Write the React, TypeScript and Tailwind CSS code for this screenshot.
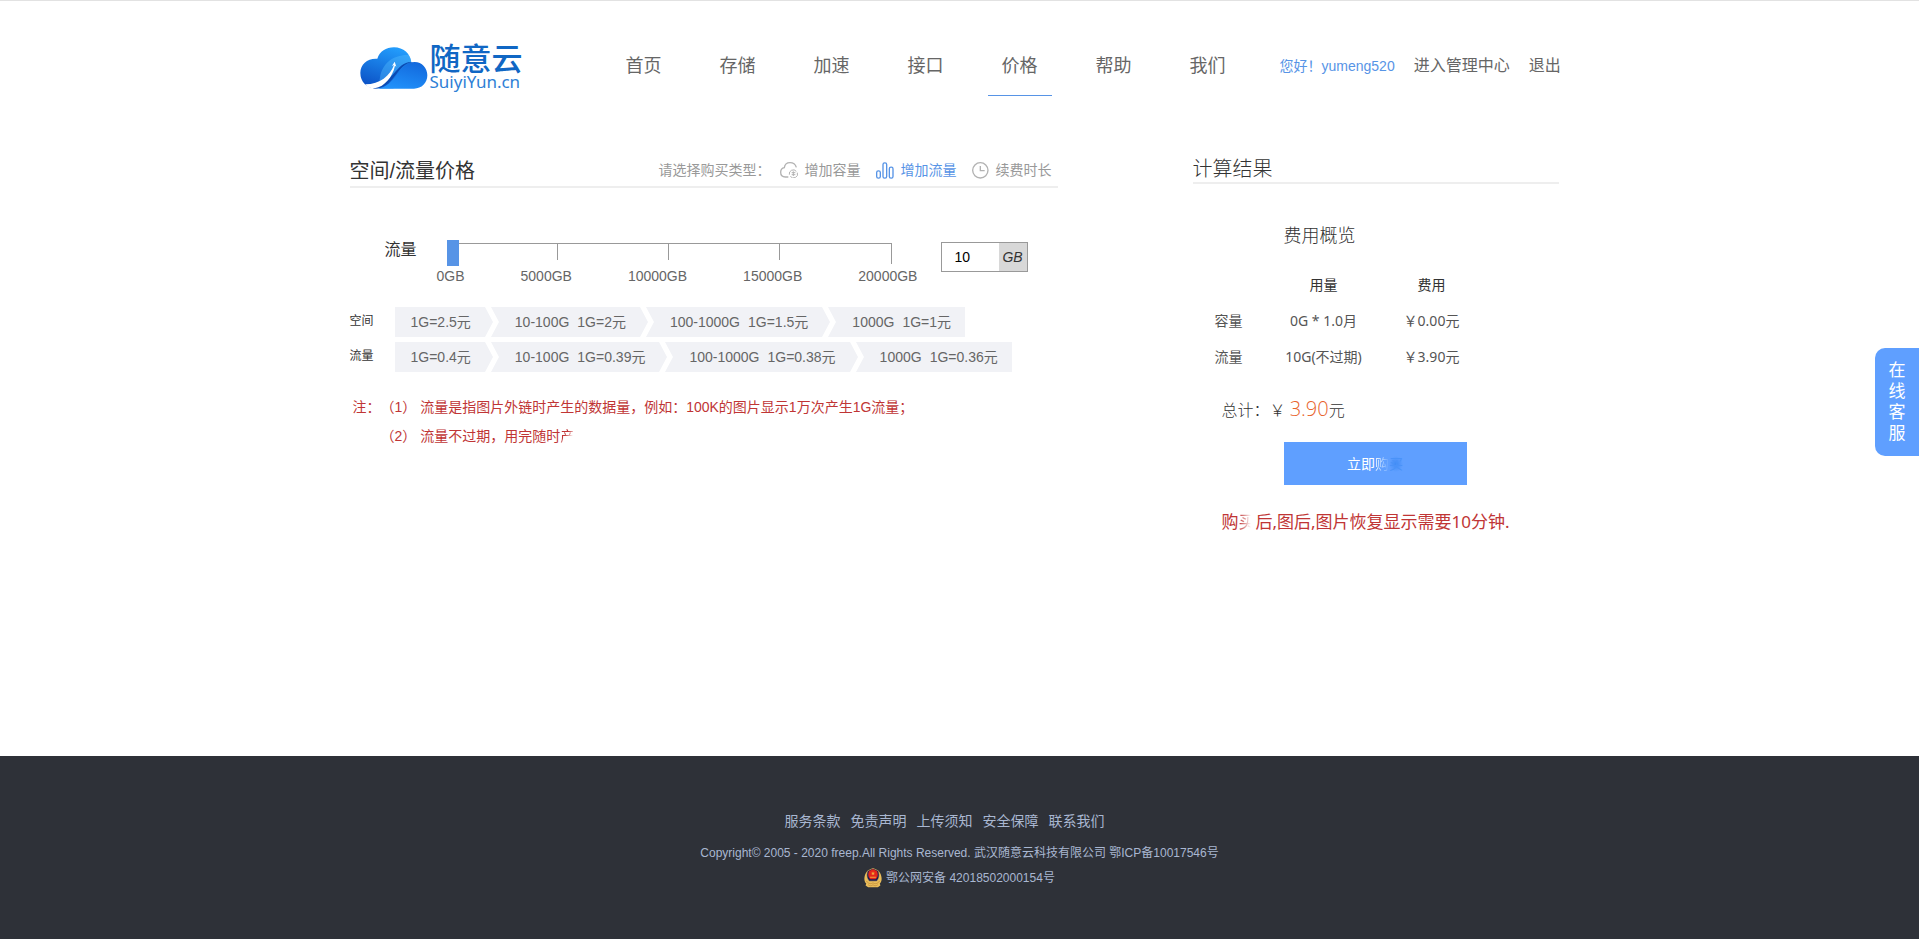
import clsx from 'clsx';
import { useState } from 'react';

type PriceTier = { range?: string; price: string };

const navItems = ['首页', '存储', '加速', '接口', '价格', '帮助', '我们'];

const spaceTiers: PriceTier[] = [
  { price: '1G=2.5元' },
  { range: '10-100G', price: '1G=2元' },
  { range: '100-1000G', price: '1G=1.5元' },
  { range: '1000G', price: '1G=1元' },
];

const trafficTiers: PriceTier[] = [
  { price: '1G=0.4元' },
  { range: '10-100G', price: '1G=0.39元' },
  { range: '100-1000G', price: '1G=0.38元' },
  { range: '1000G', price: '1G=0.36元' },
];

const footerLinks = ['服务条款', '免责声明', '上传须知', '安全保障', '联系我们'];

function Logo() {
  return (
    <a href="#" className="flex items-center gap-[2px]">
      <svg viewBox="0 0 204 126" className="h-[42px] w-[68px]" aria-hidden="true">
        <defs>
          <linearGradient id="cloud-back" x1="0.6" y1="0" x2="0.2" y2="1">
            <stop offset="0" stopColor="#229bfb" />
            <stop offset="1" stopColor="#0b4fc4" />
          </linearGradient>
          <linearGradient id="cloud-front" x1="0.3" y1="1" x2="0.8" y2="0">
            <stop offset="0" stopColor="#2192fb" />
            <stop offset="1" stopColor="#1268dc" />
          </linearGradient>
        </defs>
        <path
          d="M50 124C20 124 1 104 1 78c0-26 20-43 46-43h5C59 13 78 1 102 1c28 0 50 19 52 46 4 30-20 60-54 77z"
          fill="url(#cloud-back)"
        />
        <path d="M60 92C66 50 100 22 146 24c5 7 8 14 8 23-40 4-52 46-94 68-4-6-2-15 0-23z" fill="#55bdff" opacity="0.4" />
        <path
          d="M50 125c60-6 64-80 114-80 22 0 38 18 38 40 0 23-17 40-40 40z"
          fill="url(#cloud-front)"
        />
        <path d="M40 125c64 0 68-74 118-80-46-6-58 62-118 78z" fill="#0b4bb4" />
        <path
          d="M16 112c44 0 74-26 86-58l-6 3 8-13 5 15-4-3c-8 34-30 62-61 68-12 1-22-4-28-12z"
          fill="#fff"
        />
      </svg>
      <span className="flex flex-col">
        <span className="text-[31px] leading-[28px] font-medium text-[#1067c4]">随意云</span>
        <span className="font-['Noto_Sans'] text-[17px] leading-[16px] text-[#2e80d6]">
          SuiyiYun.cn
        </span>
      </span>
    </a>
  );
}

function CapacityIcon() {
  return (
    <svg viewBox="0 0 54 48" className="h-4 w-[18px]" fill="none" stroke="#b2b2b2" strokeWidth="4" aria-hidden="true">
      <path d="M49 16C46 6 38 2 30 2 20 2 14 9 13 17 6 18 2 24 2 31c0 9 6 14 14 14h9" />
      <path d="M28 38a12 12 0 0 1 21-10M52 32a12 12 0 0 1-21 11M35 32h11M35 38h11M40 28v14" strokeWidth="3" />
    </svg>
  );
}

function TrafficIcon() {
  return (
    <svg viewBox="0 0 54 50" className="h-[17px] w-[18px]" fill="none" stroke="#5794e6" strokeWidth="4" aria-hidden="true">
      <rect x="2" y="26" width="11" height="22" rx="5" />
      <rect x="21" y="2" width="11" height="46" rx="5" />
      <rect x="40" y="15" width="11" height="33" rx="5" />
    </svg>
  );
}

function DurationIcon() {
  return (
    <svg viewBox="0 0 51 51" className="size-[17px]" fill="none" stroke="#b2b2b2" strokeWidth="4" aria-hidden="true">
      <circle cx="25" cy="25" r="23" />
      <path d="M25 12v14h13" />
    </svg>
  );
}

function PoliceBadge() {
  return (
    <svg viewBox="0 0 54 62" className="h-5 w-[18px]" aria-hidden="true">
      <path d="M8 12C-2 24-2 42 6 48l-2 6 8 6h30l8-6-2-6c8-6 8-24-2-36z" fill="#e9bd5a" />
      <path d="M27 1l17 8c5 16 1 26-6 32H16C9 35 5 25 10 9z" fill="#171c54" stroke="#e9bd5a" strokeWidth="2" />
      <path d="M27 3l13 7c4 12 1 20-5 25H19c-6-5-9-13-5-25z" fill="#e3261a" />
      <path d="M27 11l2 4h4l-3 3 1 4-4-2-4 2 1-4-3-3h4zM18 27h18v3H18z" fill="#f3a33a" />
      <path d="M6 40c8 10 14 10 21 6 7 4 13 4 21-6M12 52c6 4 10 4 15 0 5 4 9 4 15 0" fill="none" stroke="#b98132" strokeWidth="2" />
    </svg>
  );
}

function PriceRow({ label, tiers }: { label: string; tiers: PriceTier[] }) {
  return (
    <div className="flex">
      <span className="w-[45px] shrink-0 pt-1 text-xs leading-5 text-[#333]">{label}</span>
      <ul className="flex">
        {tiers.map((tier, index) => (
          <li key={tier.price} className="flex h-[30px] items-center bg-[#f1f2f6]">
            <span
              className={clsx(
                'flex gap-2 pl-4 text-sm whitespace-nowrap text-[#666]',
                index === tiers.length - 1 && 'pr-[14px]',
              )}
            >
              {tier.range && <span>{tier.range}</span>}
              <span>{tier.price}</span>
            </span>
            {index < tiers.length - 1 && (
              <svg viewBox="0 0 14 30" className="ml-[14px] h-[30px] w-[14px]" aria-hidden="true">
                <path d="M0 0h6l8 15-8 15H0l8-15z" fill="#fff" />
              </svg>
            )}
          </li>
        ))}
      </ul>
    </div>
  );
}

function TrafficSlider({ value, onChange }: { value: number; onChange: (value: number) => void }) {
  return (
    <div className="flex pt-[52px] pl-[35px]">
      <label htmlFor="traffic" className="w-[62px] text-base leading-5 text-[#333]">
        流量
      </label>
      <div className="w-[484px]">
        <div className="relative h-[26px] pt-[3px]">
          <div className="grid w-[445px] grid-cols-4 border-t border-[#999]">
            <span className="h-4 border-r border-[#999]" />
            <span className="h-4 border-r border-[#999]" />
            <span className="h-4 border-r border-[#999]" />
            <span className="h-5 border-r border-[#999]" />
          </div>
          <input
            id="traffic"
            type="range"
            min={0}
            max={20000}
            value={value}
            onChange={(event) => onChange(Number(event.target.value))}
            className="absolute top-0 left-0 h-[26px] w-[452px] appearance-none bg-transparent [&::-webkit-slider-thumb]:h-[26px] [&::-webkit-slider-thumb]:w-3 [&::-webkit-slider-thumb]:appearance-none [&::-webkit-slider-thumb]:bg-[#5794e6]"
          />
        </div>
        <div className="-ml-[10px] flex w-[481px] justify-between text-sm leading-5 text-[#666]">
          <span>0GB</span>
          <span>5000GB</span>
          <span>10000GB</span>
          <span>15000GB</span>
          <span>20000GB</span>
        </div>
      </div>
      <div className="mt-[2px] ml-[10px] flex h-[30px] w-[87px] border border-[#999] text-sm">
        <input
          type="text"
          aria-label="流量 GB"
          value={value}
          onChange={(event) => onChange(Number(event.target.value) || 0)}
          className="w-[57px] pl-[13px] text-black"
        />
        <span className="flex flex-1 items-center justify-center bg-[#d8d8d8] text-[#333] italic">GB</span>
      </div>
    </div>
  );
}

export default function App() {
  const [traffic, setTraffic] = useState(10);

  return (
    <div className="flex min-h-screen flex-col border-t border-[#e2e2e2] bg-white font-['Liberation_Sans','Noto_Sans_CJK_SC',sans-serif] text-[#333]">
      <header className="mx-auto flex w-full max-w-[1220px] pl-[10px]">
        <div className="w-[252px] pt-[45px]">
          <Logo />
        </div>
        <nav className="flex gap-[30px] pt-[45px] text-lg leading-10 text-[#666]">
          {navItems.map((item) => (
            <a
              key={item}
              href="#"
              className={clsx(
                'flex h-[50px] w-16 justify-center border-b',
                item === '价格' ? 'border-[#5794e6]' : 'border-transparent',
              )}
            >
              {item}
            </a>
          ))}
        </nav>
        <div className="ml-10 flex gap-[19px] pt-[45px] text-base leading-10 whitespace-nowrap text-[#666]">
          <span className="text-sm leading-10 text-[#5794e6]">您好！yumeng520</span>
          <a href="#">进入管理中心</a>
          <a href="#">退出</a>
        </div>
      </header>

      <main className="mx-auto flex w-full max-w-[1220px] flex-1 justify-between pt-[58px] pr-[11px]">
        <section className="w-[708px]">
          <div className="flex items-center justify-between border-b-2 border-[#eee] pr-[6px]">
            <h2 className="pt-[2px] text-xl leading-[30px]">空间/流量价格</h2>
            <div className="flex items-center text-sm text-[#999]">
              <span className="mr-[9px]">请选择购买类型：</span>
              <button type="button" className="mr-[15px] flex items-center gap-[7px]">
                <CapacityIcon />
                增加容量
              </button>
              <button type="button" className="mr-[15px] flex items-center gap-[7px] text-[#5794e6]">
                <TrafficIcon />
                增加流量
              </button>
              <button type="button" className="flex items-center gap-[7px]">
                <DurationIcon />
                续费时长
              </button>
            </div>
          </div>

          <TrafficSlider value={traffic} onChange={setTraffic} />

          <div className="mt-[21px] flex flex-col gap-[5px]">
            <PriceRow label="空间" tiers={spaceTiers} />
            <PriceRow label="流量" tiers={trafficTiers} />
          </div>

          <div className="mt-[21px] flex pl-[3px] text-sm leading-[29px] text-[#c03535]">
            <span className="w-7">注：</span>
            <ol>
              <li>（1） 流量是指图片外链时产生的数据量，例如：100K的图片显示1万次产生1G流量；</li>
              <li>
                （2） 流量不过期，用完随时
                <span className="bg-linear-to-br from-[#c03535] from-40% to-transparent to-70% bg-clip-text text-transparent">
                  产
                </span>
              </li>
            </ol>
          </div>
        </section>

        <section className="w-[366px]">
          <h2 className="border-b-2 border-[#eee] pt-[2px] text-xl leading-[26px] font-light">计算结果</h2>
          <div className="pl-[22px]">
            <h3 className="pt-[38px] pl-[69px] text-lg leading-7 font-light">费用概览</h3>
            <table className="mt-[17px] w-[270px] table-fixed text-center font-['Noto_Sans','Noto_Sans_CJK_SC',sans-serif] text-sm text-[#555]">
              <thead>
                <tr className="h-9 text-[#333]">
                  <td className="w-[54px]" />
                  <th scope="col" className="w-[110px] font-normal">用量</th>
                  <th scope="col" className="font-normal">费用</th>
                </tr>
              </thead>
              <tbody>
                <tr className="h-9">
                  <th scope="row" className="text-left font-normal">容量</th>
                  <td>0G * 1.0月</td>
                  <td>￥0.00元</td>
                </tr>
                <tr className="h-9">
                  <th scope="row" className="text-left font-normal">流量</th>
                  <td>10G(不过期)</td>
                  <td>￥3.90元</td>
                </tr>
              </tbody>
            </table>
            <p className="mt-[19px] pl-[7px] font-['Open_Sans','Noto_Sans_CJK_SC',sans-serif] text-base leading-8 font-light">
              总计：￥ <span className="text-xl text-[#e8632c]">3.90</span>元
            </p>
            <button
              type="button"
              className="mt-4 ml-[69px] h-[43px] w-[183px] bg-[#5f9fff] text-sm text-white"
            >
              立即
              <span className="bg-linear-to-r from-white to-[#5f9fff] bg-clip-text text-transparent">购</span>
              <span className="bg-[radial-gradient(closest-side,#3f8bf5,transparent)] text-[#4a92f8]">买</span>
            </button>
            <p className="mt-[21px] pl-[7px] font-['Noto_Sans','Noto_Sans_CJK_SC',sans-serif] text-[17px] leading-8 whitespace-nowrap text-[#c03535]">
              购
              <span className="bg-linear-to-r from-[#c03535] to-transparent to-70% bg-clip-text text-transparent">买</span>
              后,图后,图片恢复显示需要10分钟.
            </p>
          </div>
        </section>
      </main>

      <footer className="flex h-[183px] flex-col items-center bg-[#2e3138] pt-[53px] text-xs text-[#a9b7d1]">
        <nav className="flex gap-[10px] pr-[30px] text-sm leading-6">
          {footerLinks.map((link) => (
            <a key={link} href="#">
              {link}
            </a>
          ))}
        </nav>
        <p className="mt-[10px] leading-5">
          Copyright© 2005 - 2020 freep.All Rights Reserved. 武汉随意云科技有限公司 鄂ICP备10017546号
        </p>
        <p className="mt-[5px] flex items-center gap-1 leading-5">
          <PoliceBadge />
          <a href="#">鄂公网安备 42018502000154号</a>
        </p>
      </footer>

      <button
        type="button"
        className="fixed top-[348px] right-0 flex h-[108px] w-11 flex-col items-center justify-center rounded-l-[10px] bg-[#5f9fff] text-[17px] leading-[21px] text-white"
      >
        <span>在</span>
        <span>线</span>
        <span>客</span>
        <span>服</span>
      </button>
    </div>
  );
}
